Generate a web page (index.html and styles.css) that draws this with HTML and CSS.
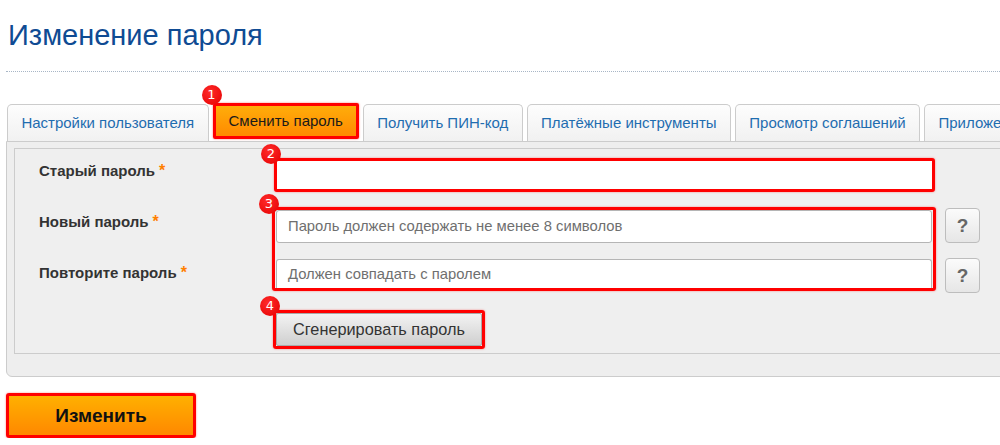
FILE: index.html
```html
<!DOCTYPE html>
<html lang="ru">
<head>
<meta charset="utf-8">
<title>Изменение пароля</title>
<link rel="stylesheet" href="styles.css">
</head>
<body>
<div class="page">
  <h1 class="title">Изменение пароля</h1>
  <div class="rule"></div>

  <div class="tabs">
    <div class="tab">Настройки пользователя</div>
    <div class="tab tab-active">Сменить пароль<span class="badge badge-1">1</span></div>
    <div class="tab">Получить ПИН-код</div>
    <div class="tab">Платёжные инструменты</div>
    <div class="tab">Просмотр соглашений</div>
    <div class="tab">Приложения</div>
  </div>

  <div class="panel">
    <div class="inner">
      <div class="row row-old">
        <div class="label">Старый пароль<span class="req">*</span></div>
        <div class="mark mark-old"><span class="badge badge-2">2</span><div class="field field-plain"></div></div>
      </div>

      <div class="row row-new">
        <div class="labels">
          <div class="label">Новый пароль<span class="req">*</span></div>
          <div class="label label-repeat">Повторите пароль<span class="req">*</span></div>
        </div>
        <div class="mark mark-new">
          <span class="badge badge-3">3</span>
          <div class="field field-first">Пароль должен содержать не менее 8 символов</div>
          <div class="field field-second">Должен совпадать с паролем</div>
        </div>
        <div class="helps">
          <div class="help">?</div>
          <div class="help">?</div>
        </div>
      </div>

      <div class="row row-gen">
        <div class="mark mark-gen"><span class="badge badge-4">4</span><div class="gen-btn">Сгенерировать пароль</div></div>
      </div>
    </div>
  </div>

  <div class="submit">Изменить</div>
</div>
</body>
</html>
```

FILE: styles.css
```css
html, body {
  margin: 0;
  padding: 0;
  background: #ffffff;
  overflow: hidden;
}

body {
  font-family: "Liberation Sans", Arial, sans-serif;
  color: #333333;
}

.page {
  width: 1120px;
  padding-left: 6px;
}

.title {
  margin: 0;
  padding: 18px 0 0 2px;
  font-size: 29px;
  line-height: 34px;
  font-weight: normal;
  color: #0f4b93;
}

.rule {
  margin-top: 19px;
  border-top: 1px dotted #a8b6c6;
}

.tabs {
  display: flex;
  align-items: flex-end;
  gap: 4px;
  margin-top: 31px;
  padding-left: 1px;
}

.tab {
  position: relative;
  height: 36px;
  line-height: 36px;
  padding: 0 13.4px;
  border: 1px solid #cccccc;
  border-bottom: none;
  border-radius: 5px 5px 0 0;
  background: linear-gradient(#fdfdfd, #f1f1f1);
  color: #1f6db0;
  font-size: 15px;
  white-space: nowrap;
}

.tab-active {
  height: 30px;
  line-height: 30px;
  margin-bottom: 2px;
  padding: 0 13px;
  border: 3px solid #ff0000;
  border-radius: 2px;
  background: linear-gradient(#ffad0a, #ff8a00);
  color: #1a1a1a;
  box-shadow: 0 0 2px rgba(255, 0, 0, 0.6);
}

.badge {
  position: absolute;
  width: 20px;
  height: 20px;
  border-radius: 50%;
  background: radial-gradient(circle at 40% 35%, #ff2a2a, #e40000);
  color: #ffffff;
  font-family: "DejaVu Sans", sans-serif;
  font-size: 13px;
  line-height: 20px;
  text-align: center;
  z-index: 2;
}

.badge-1 { left: -14px; top: -21px; }
.badge-2 { left: -16px; top: -17px; }
.badge-3 { left: -16px; top: -16px; }
.badge-4 { left: -16px; top: -17px; }

.panel {
  border: 1px solid #cccccc;
  border-radius: 0 0 0 6px;
  background: #eeeeee;
  padding: 6px 7px 22px 7px;
}

.inner {
  border: 1px solid #cccccc;
  background: #efefef;
  padding: 8px 0 4px 24px;
}

.row {
  display: flex;
  align-items: flex-start;
}

.label {
  width: 235px;
  flex: none;
  padding-top: 4px;
  line-height: 20px;
  font-size: 15px;
  font-weight: bold;
  color: #333333;
}

.req {
  color: #ff7f00;
  margin-left: 4px;
  font-weight: bold;
  font-size: 16px;
}

.mark {
  position: relative;
  box-sizing: border-box;
  border: 3px solid #ff0000;
  border-radius: 3px;
  box-shadow: 0 0 2px rgba(255, 0, 0, 0.5);
}

.mark-old {
  width: 661px;
  height: 34px;
  margin-top: 1px;
  background: #ffffff;
}

.field-plain {
  height: 100%;
}

.row-new {
  margin-top: 15px;
}

.labels {
  width: 235px;
  flex: none;
}

.labels .label {
  padding-top: 5px;
}

.label-repeat {
  margin-top: 26px;
}

.mark-new {
  width: 664px;
  height: 84px;
  margin-left: -2px;
  padding: 0 1px;
}

.field {
  box-sizing: border-box;
  background: #ffffff;
  border: 1px solid #b5b5b5;
  border-radius: 3px;
  padding-left: 11px;
  font-size: 14.8px;
  color: #6f6f6f;
  white-space: nowrap;
}

.field-plain {
  border: none;
  border-radius: 0;
}

.field-first {
  height: 33px;
  line-height: 31px;
  margin-bottom: 16px;
}

.field-second {
  height: 29px;
  line-height: 29px;
  border-bottom: none;
  border-radius: 3px 3px 0 0;
}

.helps {
  display: flex;
  flex-direction: column;
  gap: 15px;
  margin-left: 9px;
  margin-top: 1px;
}

.help {
  box-sizing: border-box;
  width: 35px;
  height: 35px;
  border: 1px solid #bdbdbd;
  border-radius: 4px;
  background: linear-gradient(#fbfbfb, #e6e6e6);
  color: #666666;
  font-size: 19px;
  font-weight: bold;
  line-height: 33px;
  text-align: center;
}

.row-gen {
  margin-top: 17px;
  padding-left: 234px;
}

.mark-gen {
  width: 212px;
  height: 39px;
}

.gen-btn {
  box-sizing: border-box;
  height: 100%;
  border: 1px solid #a9a9a9;
  border-radius: 2px;
  background: linear-gradient(#f3f3f3, #cfcfcf);
  color: #333333;
  font-size: 16.3px;
  line-height: 31px;
  text-align: center;
}

.submit {
  box-sizing: border-box;
  width: 190px;
  height: 45px;
  margin-top: 16px;
  border: 3px solid #ff0000;
  border-radius: 3px;
  background: linear-gradient(#ffb000, #ff8800);
  box-shadow: 0 0 2px rgba(255, 0, 0, 0.5);
  color: #111111;
  font-size: 19px;
  font-weight: bold;
  line-height: 39px;
  text-align: center;
}
```
